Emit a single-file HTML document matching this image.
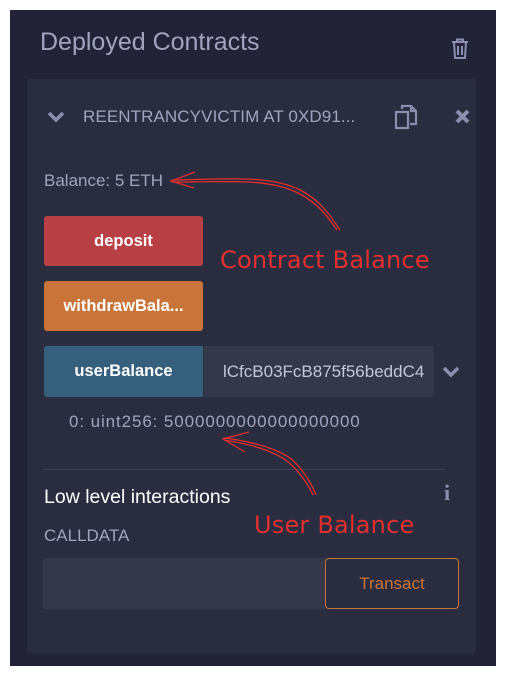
<!DOCTYPE html>
<html><head><style>
body{margin:0;width:506px;height:677px;background:#fff;position:relative;font-family:"Liberation Sans",sans-serif;overflow:hidden}
.a{position:absolute}
#outer{left:10px;top:10px;width:486px;height:656px;background:#222336}
#card{left:27px;top:79px;width:449px;height:575px;background:#2a2c3f;border-radius:3px}
.btn{position:absolute;left:44px;width:159px;height:50px;border-radius:3px;color:#fff;font-weight:bold;font-size:16.5px;text-align:center;line-height:50px}
.hand{font-family:"DejaVu Sans",sans-serif;color:#e03030;font-size:24px;letter-spacing:0.2px}
</style></head><body>
<div class="a" id="outer"></div>
<div class="a" id="card"></div>
<div class="a" style="left:40px;top:28px;font-size:25px;color:#a2a3bd">Deployed Contracts</div>
<svg class="a" style="left:451px;top:38px" width="18" height="22" viewBox="0 0 18 22"><path d="M1 4h16M6 4V1.5h6V4M3 4l1 16h10l1-16M7 8v9M11 8v9" stroke="#8a8fb0" stroke-width="2" fill="none"/></svg>
<svg class="a" style="left:47px;top:111px" width="18" height="12" viewBox="0 0 18 12"><path d="M2 2l7 7 7-7" stroke="#8a8fb0" stroke-width="3.5" fill="none"/></svg>
<div class="a" style="left:83px;top:107px;font-size:17px;color:#a2a3bd;letter-spacing:0.1px">REENTRANCYVICTIM AT 0XD91...</div>
<svg class="a" style="left:394px;top:104px" width="24" height="26" viewBox="0 0 24 26"><path d="M8 5V2h9l5 5v13h-6M2 8h12v16H2z M17 2v5h5" stroke="#8a8fb0" stroke-width="2.2" fill="none"/></svg>
<svg class="a" style="left:455px;top:109px" width="15" height="15" viewBox="0 0 15 15"><path d="M2 2l11 11M13 2L2 13" stroke="#8a8fb0" stroke-width="4"/></svg>
<div class="a" style="left:44px;top:171px;font-size:17px;color:#a2a3bd">Balance: 5 ETH</div>
<div class="btn" style="top:216px;background:#b83f43">deposit</div>
<div class="btn" style="top:281px;background:#c97539">withdrawBala...</div>
<div class="btn" style="top:346px;height:51px;line-height:51px;background:#355f7d;border-radius:3px 0 0 3px">userBalance</div>
<div class="a" style="left:204px;top:346px;width:230px;height:51px;background:#353849;border-radius:0 3px 3px 0;color:#c4c6dc;font-size:17px;line-height:51px;text-indent:19px">lCfcB03FcB875f56beddC4</div>
<svg class="a" style="left:442px;top:366px" width="18" height="12" viewBox="0 0 18 12"><path d="M2 2l7 7 7-7" stroke="#8a8fb0" stroke-width="3.5" fill="none"/></svg>
<div class="a" style="left:69px;top:412px;font-size:17px;color:#a2a3bd;letter-spacing:0.9px">0: uint256: 5000000000000000000</div>
<div class="a" style="left:43px;top:469px;width:402px;height:1px;background:#3b3e55"></div>
<div class="a" style="left:44px;top:486px;font-size:19.5px;color:#fff">Low level interactions</div>
<div class="a" style="left:444px;top:480px;font-size:22px;font-weight:bold;color:#8a8fb0;font-family:'Liberation Serif',serif">i</div>
<div class="a" style="left:44px;top:526px;font-size:17px;color:#a2a3bd">CALLDATA</div>
<div class="a" style="left:43px;top:558px;width:283px;height:51px;background:#353849;border-radius:3px 0 0 3px"></div>
<div class="a" style="left:325px;top:558px;width:132px;height:49px;border:1px solid #c97539;border-radius:4px;color:#c97539;font-size:17px;text-align:center;line-height:49px">Transact</div>
<svg class="a" style="left:0;top:0" width="506" height="677">
<g stroke="#e03030" stroke-width="1.3" fill="none">
<path d="M172 180 C230 179 270 175 300 190 C320 200 330 215 340 230"/>
<path d="M172 182 C230 182 268 178 298 193 C318 203 328 217 337 230"/>
<path d="M195 172 L171 181 L194 188"/>
<path d="M224 438 C250 441 275 448 290 458 C300 466 310 480 316 495"/>
<path d="M224 440 C250 444 273 451 287 461 C297 469 307 482 313 495"/>
<path d="M249 432 L223 439 L245 452"/>
</g></svg>
<div class="a hand" style="left:220px;top:246px">Contract Balance</div>
<div class="a hand" style="left:254px;top:511px">User Balance</div>
</body></html>
